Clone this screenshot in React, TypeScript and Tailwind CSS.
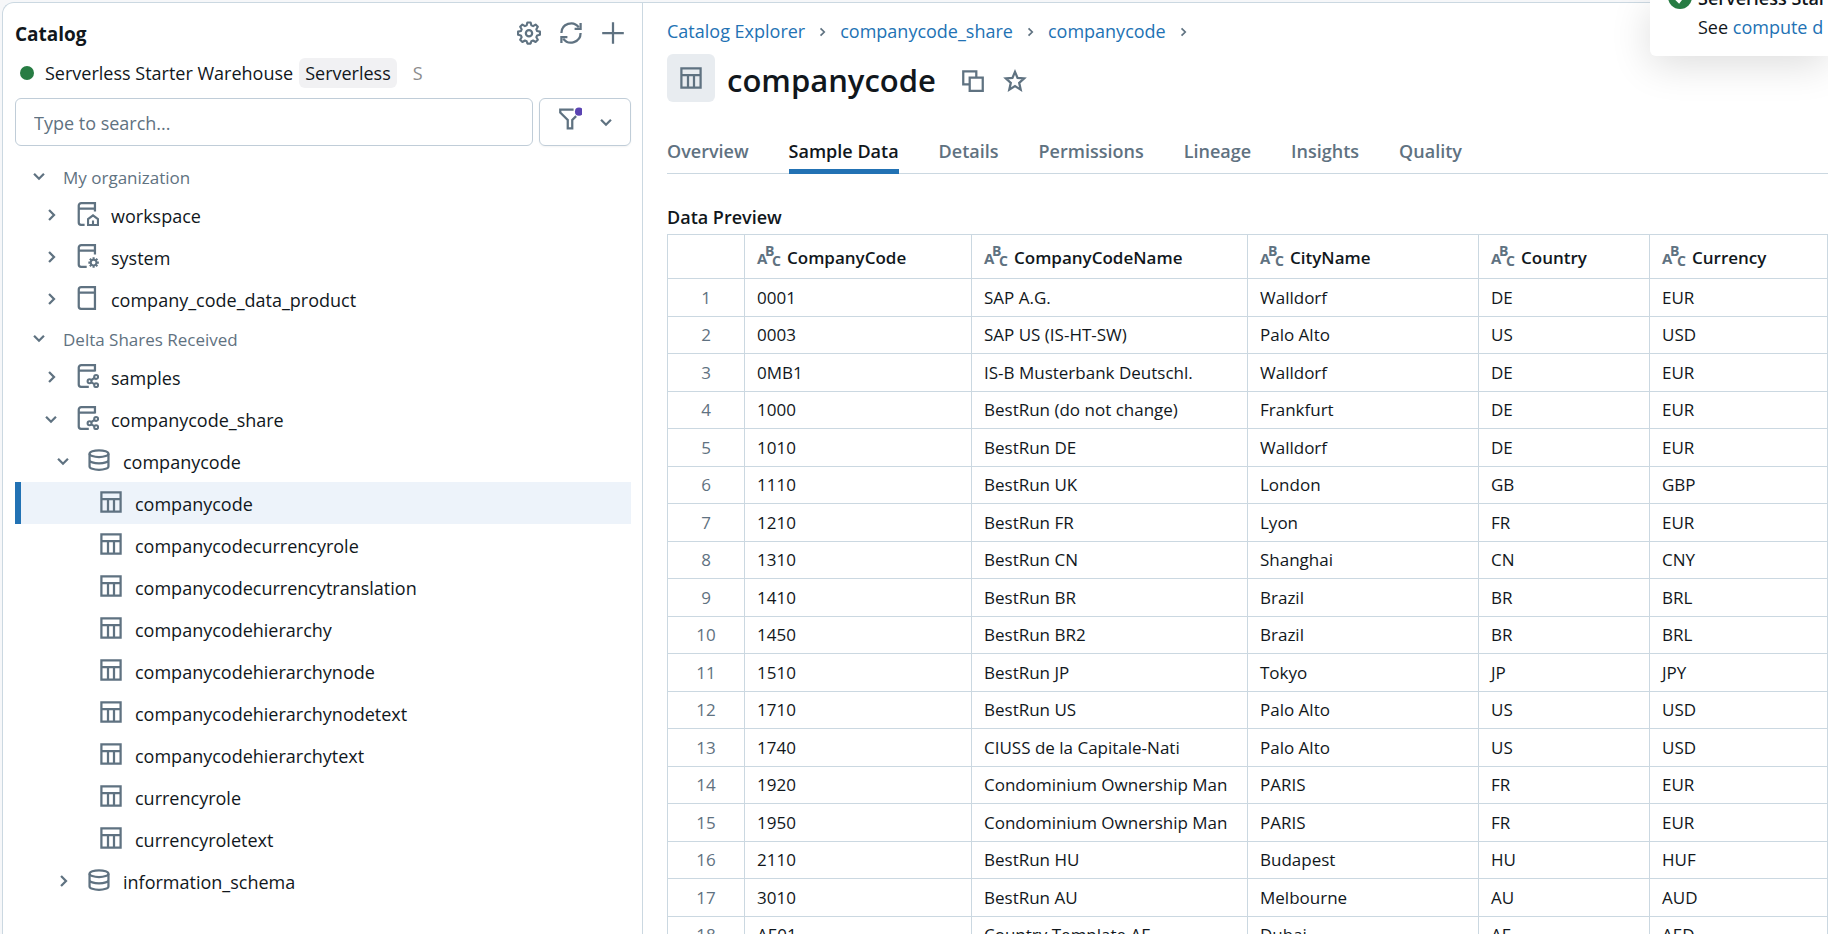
import React from "react";

type IconProps = { className?: string };

function Svg({ className = "size-6", children }: IconProps & { children: React.ReactNode }) {
  return (
    <svg viewBox="0 0 16 16" fill="none" stroke="currentColor" strokeWidth="1.5" aria-hidden="true" className={`${className} shrink-0`}>
      {children}
    </svg>
  );
}

const TableIcon = (p: IconProps) => (
  <Svg {...p}>
    <path d="M1.6 1.6h12.8v12.8H1.6zM1.6 6.1h12.8M6 6.1v8.3M10 6.1v8.3" strokeWidth="1.5" />
  </Svg>
);
const SchemaIcon = (p: IconProps) => (
  <Svg {...p}>
    <ellipse cx="8" cy="3.75" rx="6.3" ry="2.25" />
    <path d="M1.7 3.75v8.5C1.7 13.5 4.5 14.5 8 14.5s6.3-1 6.3-2.25v-8.5M1.7 8c0 1.25 2.8 2.25 6.3 2.25S14.3 9.25 14.3 8" />
  </Svg>
);
const CatalogIcon = (p: IconProps) => (
  <Svg {...p}>
    <path d="M13.3 4.4H2.6M13.3.8v14.4H4a1.5 1.5 0 0 1-1.5-1.5V2.4C2.5 1.4 3.2.8 4.2.8z" />
  </Svg>
);
const CatalogHomeIcon = (p: IconProps) => (
  <Svg {...p}>
    <path d="M13.3 6.4V.8H4.2C3.2.8 2.5 1.4 2.5 2.4v11.3c0 .9.6 1.5 1.5 1.5h2.4M2.6 4.4h10.7" />
    <path d="M8.7 15.3v-3.9L12 8.9l3.3 2.5v3.9zM12 15v-2.6" strokeWidth="1.4" />
  </Svg>
);
const CatalogGearIcon = (p: IconProps) => (
  <Svg {...p}>
    <path d="M13.3 7V.8H4.2C3.2.8 2.5 1.4 2.5 2.4v11.3c0 .9.6 1.5 1.5 1.5h3.8M2.6 4.4h10.7" />
    <circle cx="12.4" cy="12.4" r="1.9" strokeWidth="1.3" />
    <path d="M12.4 8.9v1.4M12.4 14.5v1.4M8.9 12.4h1.4M14.5 12.4h1.4M9.9 9.9l1 1M13.9 13.9l1 1M9.9 14.9l1-1M13.9 10.9l1-1" strokeWidth="1.4" />
  </Svg>
);
const CatalogShareIcon = (p: IconProps) => (
  <Svg {...p}>
    <path d="M13.3 5V.8H4.2C3.2.8 2.5 1.4 2.5 2.4v11.3c0 .9.6 1.5 1.5 1.5h5.2M2.6 4.4h10.7" />
    <circle cx="14.1" cy="8.6" r="1.3" strokeWidth="1.4" />
    <circle cx="9.7" cy="11.5" r="1.3" strokeWidth="1.4" />
    <circle cx="14.1" cy="14.1" r="1.3" strokeWidth="1.4" />
    <path d="m10.8 10.8 2.2-1.5M10.8 12.2l2.2 1.2" strokeWidth="1.4" />
  </Svg>
);
const ChevronDown = (p: IconProps) => (
  <Svg {...p}>
    <path d="m4.7 6.5 3.3 3.3 3.3-3.3" />
  </Svg>
);
const ChevronRight = (p: IconProps) => (
  <Svg {...p}>
    <path d="m6.7 4.7 3.3 3.3-3.3 3.3" />
  </Svg>
);
const GearIcon = (p: IconProps) => (
  <Svg {...p}>
    <path
      d="M6.9 1h2.2l.45 1.9 1.15.5 1.7-1.05 1.5 1.5-1 1.7.5 1.15L15.3 7.1v2.1l-1.9.45-.5 1.15 1 1.7-1.5 1.5-1.7-1-1.15.45-.45 1.6H6.9l-.45-1.6-1.15-.45-1.7 1-1.5-1.5 1-1.7-.5-1.15L.7 9.2V7.1l1.9-.4.5-1.15-1-1.7 1.5-1.5L5.3 3.4l1.15-.5z"
      strokeWidth="1.4"
      strokeLinejoin="round"
    />
    <circle cx="8" cy="8.1" r="2.1" strokeWidth="1.5" />
  </Svg>
);
const SyncIcon = (p: IconProps) => (
  <Svg {...p}>
    <path d="M1.6 8A6.4 6.4 0 0 1 13.2 4.3M14.4 8A6.4 6.4 0 0 1 2.8 11.7" />
    <path d="M14.4 1.4v3.9h-4M1.6 14.6v-3.9h4" />
  </Svg>
);
const PlusIcon = (p: IconProps) => (
  <Svg {...p}>
    <path d="M8 .8v14.4M.8 8h14.4" />
  </Svg>
);
const FilterIcon = (p: IconProps) => (
  <Svg {...p}>
    <path d="M10.4 1.7H1.5v2l5 4.9v5.7h3V8.6l2.6-2.5" />
    <circle cx="14" cy="3.1" r="2.7" fill="#5a43b2" stroke="none" />
  </Svg>
);
const CopyIcon = (p: IconProps) => (
  <Svg {...p}>
    <path d="M5.8 5.8h8.7v8.7H5.8zM5.8 10.3H1.5V1.5h8.7v4.3" strokeWidth="1.5" />
  </Svg>
);
const StarIcon = (p: IconProps) => (
  <Svg {...p}>
    <path d="m8 1.9 1.7 4 4.4.4-3.3 2.9 1 4.6L8 11.4l-3.8 2.4 1-4.6-3.3-2.9 4.4-.4z" strokeWidth="1.5" />
  </Svg>
);
const StringTypeIcon = () => (
  <svg viewBox="0 0 24 24" aria-hidden="true" className="-mt-1 size-6 shrink-0 overflow-visible text-[#5f7281]" fill="currentColor" fontWeight="700">
    <text x="0" y="20" fontSize="15">A</text>
    <text x="8" y="12" fontSize="14">B</text>
    <text x="15" y="22" fontSize="14">C</text>
  </svg>
);

type Node = { label: string; indent: string; state?: "open" | "closed"; Icon: (p: IconProps) => React.ReactElement; selected?: boolean };

const organization: Node[] = [
  { label: "workspace", indent: "pl-6", state: "closed", Icon: CatalogHomeIcon },
  { label: "system", indent: "pl-6", state: "closed", Icon: CatalogGearIcon },
  { label: "company_code_data_product", indent: "pl-6", state: "closed", Icon: CatalogIcon },
];
const shared: Node[] = [
  { label: "samples", indent: "pl-6", state: "closed", Icon: CatalogShareIcon },
  { label: "companycode_share", indent: "pl-6", state: "open", Icon: CatalogShareIcon },
  { label: "companycode", indent: "pl-9", state: "open", Icon: SchemaIcon },
  { label: "companycode", indent: "pl-[78px]", Icon: TableIcon, selected: true },
  { label: "companycodecurrencyrole", indent: "pl-[78px]", Icon: TableIcon },
  { label: "companycodecurrencytranslation", indent: "pl-[78px]", Icon: TableIcon },
  { label: "companycodehierarchy", indent: "pl-[78px]", Icon: TableIcon },
  { label: "companycodehierarchynode", indent: "pl-[78px]", Icon: TableIcon },
  { label: "companycodehierarchynodetext", indent: "pl-[78px]", Icon: TableIcon },
  { label: "companycodehierarchytext", indent: "pl-[78px]", Icon: TableIcon },
  { label: "currencyrole", indent: "pl-[78px]", Icon: TableIcon },
  { label: "currencyroletext", indent: "pl-[78px]", Icon: TableIcon },
  { label: "information_schema", indent: "pl-9", state: "closed", Icon: SchemaIcon },
];

function TreeRow({ label, indent, state, Icon, selected }: Node) {
  return (
    <button
      type="button"
      aria-current={selected ? "true" : undefined}
      className={`flex h-[42px] w-full items-center gap-3 text-left ${indent} ${selected ? "border-l-6 border-[#2272b4] bg-[#edf3fa]" : state ? "" : "border-l-6 border-transparent"}`}
    >
      {state === "open" && <ChevronDown className="size-6 text-[#5f7281]" />}
      {state === "closed" && <ChevronRight className="size-6 text-[#5f7281]" />}
      <Icon className="-mt-[2px] size-6 text-[#5f7281]" />
      <span className="pt-[2px]">{label}</span>
    </button>
  );
}

function Section({ title, nodes }: { title: string; nodes: Node[] }) {
  return (
    <section>
      <button type="button" className="flex h-9 w-full items-center gap-3 pl-3 text-left text-[17px] text-[#5f7281]">
        <ChevronDown />
        <span className="pt-[3px]">{title}</span>
      </button>
      {nodes.map((n, i) => (
        <TreeRow key={i} {...n} />
      ))}
    </section>
  );
}

const tabs = ["Overview", "Sample Data", "Details", "Permissions", "Lineage", "Insights", "Quality"];
const columns = ["CompanyCode", "CompanyCodeName", "CityName", "Country", "Currency"];
const rows = [
  ["0001", "SAP A.G.", "Walldorf", "DE", "EUR"],
  ["0003", "SAP US (IS-HT-SW)", "Palo Alto", "US", "USD"],
  ["0MB1", "IS-B Musterbank Deutschl.", "Walldorf", "DE", "EUR"],
  ["1000", "BestRun (do not change)", "Frankfurt", "DE", "EUR"],
  ["1010", "BestRun DE", "Walldorf", "DE", "EUR"],
  ["1110", "BestRun UK", "London", "GB", "GBP"],
  ["1210", "BestRun FR", "Lyon", "FR", "EUR"],
  ["1310", "BestRun CN", "Shanghai", "CN", "CNY"],
  ["1410", "BestRun BR", "Brazil", "BR", "BRL"],
  ["1450", "BestRun BR2", "Brazil", "BR", "BRL"],
  ["1510", "BestRun JP", "Tokyo", "JP", "JPY"],
  ["1710", "BestRun US", "Palo Alto", "US", "USD"],
  ["1740", "CIUSS de la Capitale-Nati", "Palo Alto", "US", "USD"],
  ["1920", "Condominium Ownership Man", "PARIS", "FR", "EUR"],
  ["1950", "Condominium Ownership Man", "PARIS", "FR", "EUR"],
  ["2110", "BestRun HU", "Budapest", "HU", "HUF"],
  ["3010", "BestRun AU", "Melbourne", "AU", "AUD"],
  ["AE01", "Country Template AE", "Dubai", "AE", "AED"],
];

function Sidebar() {
  return (
    <aside className="flex w-[640px] shrink-0 flex-col border-r border-[#cbd8e1] pr-[11px] pl-3">
      <div className="flex h-14 items-center justify-between pt-1 pr-[6px]">
        <h2 className="pt-[2px] text-[19px] font-bold">Catalog</h2>
        <div className="flex gap-[18px] text-[#5f7281]">
          <button type="button" aria-label="Settings"><GearIcon /></button>
          <button type="button" aria-label="Refresh"><SyncIcon /></button>
          <button type="button" aria-label="Add"><PlusIcon /></button>
        </div>
      </div>
      <div className="-mt-px flex h-[30px] items-center pl-[5px]">
        <span className="size-[14px] rounded-full bg-[#277c43]" />
        <span className="ml-[11px]">Serverless Starter Warehouse</span>
        <span className="ml-[6px] rounded-md bg-[#f1f1f3] px-[6px] leading-[30px]">Serverless</span>
        <span className="ml-4 text-[#8c8c8c]">S</span>
      </div>
      <div className="mt-[10px] flex gap-[6px]">
        <input
          type="text"
          aria-label="Search catalog"
          placeholder="Type to search..."
          className="h-12 min-w-0 flex-1 rounded-md border border-[#c0cdd8] px-[18px] pt-[2px] placeholder:text-[#5f7281]"
        />
        <button type="button" aria-label="Filter" className="flex h-12 w-[92px] items-center gap-3 rounded-md border border-[#c0cdd8] pl-[18px] text-[#5f7281] shadow-xs">
          <FilterIcon className="-mt-[6px] size-6" />
          <ChevronDown />
        </button>
      </div>
      <nav aria-label="Catalog tree" className="mt-3">
        <Section title="My organization" nodes={organization} />
        <Section title="Delta Shares Received" nodes={shared} />
      </nav>
    </aside>
  );
}

function Crumb({ children }: { children: string }) {
  return (
    <li className="flex items-center gap-2">
      <a href="#" className="text-[#2272b4]">{children}</a>
      <ChevronRight className="size-[18px] text-[#5f7281]" />
    </li>
  );
}

function Main() {
  return (
    <main className="min-w-0 flex-1 pl-6">
      <nav aria-label="Breadcrumb">
        <ol className="flex h-[51px] items-center gap-[9px] pt-[6px]">
          <Crumb>Catalog Explorer</Crumb>
          <Crumb>companycode_share</Crumb>
          <Crumb>companycode</Crumb>
        </ol>
      </nav>
      <div className="flex h-12 items-center">
        <span className="flex size-12 items-center justify-center rounded-md bg-[#e8ecf0] text-[#5f7281]">
          <TableIcon />
        </span>
        <h1 className="ml-3 pt-1 text-[31px] leading-10 font-semibold">companycode</h1>
        <button type="button" aria-label="Copy name" className="ml-[25px] pt-[6px] text-[#5f7281]"><CopyIcon /></button>
        <button type="button" aria-label="Favorite" className="ml-[18px] pt-[6px] text-[#5f7281]"><StarIcon /></button>
      </div>
      <div role="tablist" className="mt-6 flex h-12 gap-10 border-b border-[#cbd8e1]">
        {tabs.map((t, i) => (
          <button
            key={t}
            type="button"
            role="tab"
            aria-selected={i === 1}
            className={`-mb-px border-b-5 pt-2 font-semibold ${i === 1 ? "border-[#2272b4] text-[#11171c]" : "border-transparent text-[#5f7281]"}`}
          >
            {t}
          </button>
        ))}
      </div>
      <h2 className="mt-7 mb-[2px] leading-[30px] font-semibold">Data Preview</h2>
      <table className="w-full table-fixed border-collapse text-[17px] leading-6">
        <colgroup>
          <col className="w-[77px]" />
          <col className="w-[227px]" />
          <col className="w-[276px]" />
          <col className="w-[231px]" />
          <col className="w-[171px]" />
          <col />
        </colgroup>
        <thead>
          <tr className="h-11">
            <td className="border border-[#cbd8e1]" />
            {columns.map((c) => (
              <th key={c} scope="col" className="border border-[#cbd8e1] px-3 text-left font-semibold">
                <span className="flex items-center gap-[6px] pt-[2px]">
                  <StringTypeIcon />
                  {c}
                </span>
              </th>
            ))}
          </tr>
        </thead>
        <tbody>
          {rows.map((r, i) => (
            <tr key={r[0]} className="odd:h-[38px] even:h-[37px]">
              <td className="border border-[#cbd8e1] text-center text-[#5f7281]">{i + 1}</td>
              {r.map((v, j) => (
                <td key={j} className="border border-[#cbd8e1] px-3 whitespace-nowrap">{v}</td>
              ))}
            </tr>
          ))}
        </tbody>
      </table>
    </main>
  );
}

function Toast() {
  return (
    <div role="status" className="absolute top-0 right-0 flex h-14 w-[178px] rounded-bl-md bg-white pl-[18px] shadow-[0_8px_40px_rgba(0,0,0,0.14)]">
      <svg viewBox="0 0 24 24" aria-hidden="true" className="-mt-[15px] size-6 shrink-0">
        <circle cx="12" cy="12" r="12" fill="#277c43" />
        <path d="m7 13 4 4 6-8" fill="none" stroke="#fff" strokeWidth="2.4" />
      </svg>
      <div className="-mt-4 ml-[6px] leading-[29px] whitespace-nowrap">
        <p className="font-semibold">Serverless Star</p>
        <p>See <a href="#" className="text-[#2272b4]">compute d</a></p>
      </div>
    </div>
  );
}

export default function App() {
  return (
    <div className="relative h-screen overflow-hidden bg-[#f6f7f9] pt-[2px] pl-[2px] font-['Open_Sans','Noto_Sans',sans-serif] text-[18px] text-[#11171c]">
      <div className="flex min-h-full rounded-tl-xl border-t border-l border-[#cbd8e1] bg-white">
        <Sidebar />
        <Main />
      </div>
      <Toast />
    </div>
  );
}
